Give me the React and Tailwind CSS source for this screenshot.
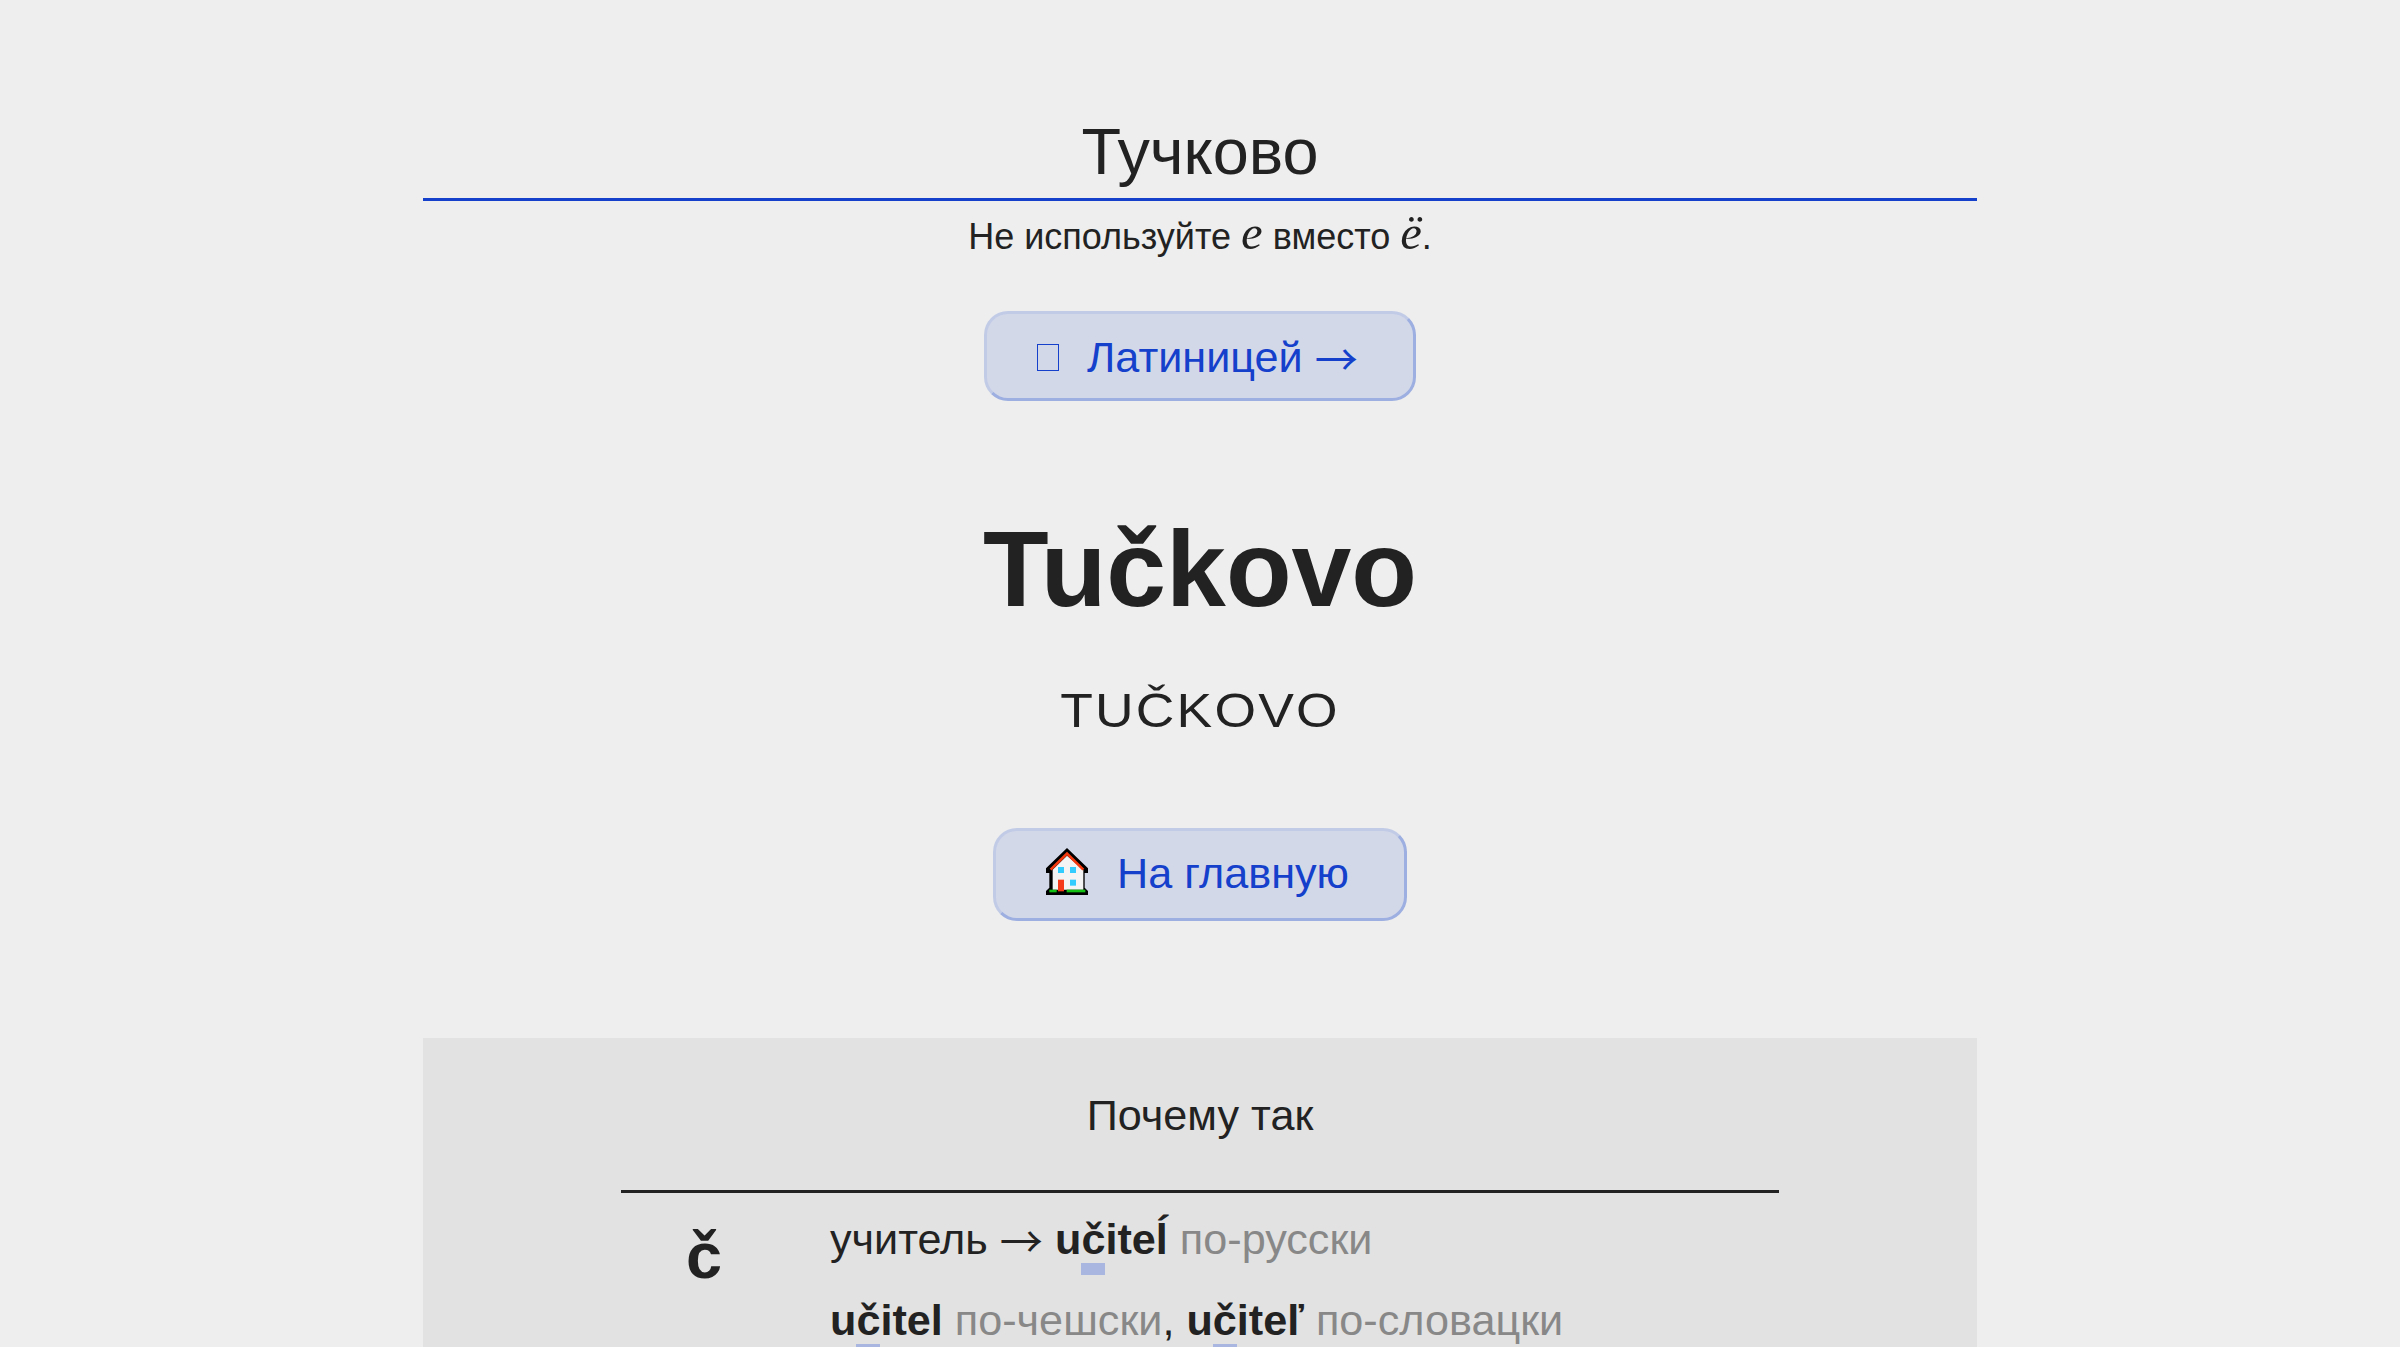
function House() {
  return (
    <svg className="mr-[29px] mb-[5px] shrink-0" width="42" height="47" viewBox="78 57 126 141" aria-hidden="true">
      <polygon fill="#000" points="141,57 204,118 204,132 194,132 194,176 204,186 204,198 78,198 78,186 88,176 88,132 78,132 78,118" />
      <polygon fill="#f4f4f4" points="141,80 190,122 190,182 98,182 98,122" />
      <polyline fill="none" stroke="#f53a10" strokeWidth="8" points="92,122 141,74 190,122" />
      <rect x="88" y="182" width="22" height="8" fill="#14c014" />
      <rect x="140" y="182" width="56" height="8" fill="#14c014" />
      <rect x="114" y="152" width="18" height="35" fill="#f53a1a" />
      <rect x="114" y="114" width="18" height="18" fill="#33ccff" />
      <rect x="150" y="114" width="18" height="18" fill="#33ccff" />
      <rect x="150" y="152" width="18" height="18" fill="#33ccff" />
    </svg>
  );
}

export default function App() {
  const mark = "border-b-[12px] border-[#a9b7e0]";
  const arrow = "font-['Noto_Sans_CJK_SC',sans-serif] leading-[0] align-[-4px]";
  return (
    <div className="h-screen overflow-hidden bg-[#eeeeee] text-[#222222] font-['Liberation_Sans',Arial,sans-serif]">
      <div className="mx-auto w-[1554px] pt-[107px] text-center">
        <h1 className="border-b-[3px] border-[#1440cc] text-[64.8px] leading-[89px] pb-[2px]">Тучково</h1>
        <p className="mt-[12px] text-[36px] leading-[48px]">
          Не используйте <i className="font-['Liberation_Serif',serif] text-[48.6px] leading-[0]">е</i> вместо <i className="font-['Liberation_Serif',serif] text-[48.6px] leading-[0]">ё</i>.
        </p>
        <a className="mt-[50px] mx-auto flex w-[432px] h-[90px] items-center justify-start pl-[50px] pt-[2px] rounded-[24px] border-[3px] border-t-[#c2cbe6] border-l-[#c2cbe6] border-r-[#9dafe0] border-b-[#9dafe0] bg-[#d3d8e9] text-[#1440cc] text-[43.2px]">
          <span className="mr-[28px] inline-block w-[22px] h-[27px] border border-[#1440cc]" />
          <span>Латиницей <span className={arrow}>→</span></span>
        </a>
        <div className="mt-[105px] font-bold text-[107.5px] leading-[126px]">Tučkovo</div>
        <div className="mt-[45px] text-[48.6px] leading-[66px] tracking-[2px] scale-x-[1.1]">TUČKOVO</div>
        <a className="mt-[85px] mx-auto flex w-[414px] h-[93px] items-center justify-start pl-[50px] pb-[2px] rounded-[24px] border-[3px] border-t-[#c2cbe6] border-l-[#c2cbe6] border-r-[#9dafe0] border-b-[#9dafe0] bg-[#d3d8e9] text-[#1440cc] text-[43.2px]">
          <House />
          На главную
        </a>
        <section className="mt-[117px] bg-[#e2e2e2] h-[400px] pt-[49px]">
          <h2 className="text-[43.2px] leading-[56px]">Почему так</h2>
          <div className="mx-auto mt-[47px] w-[1158px] border-t-[3px] border-[#222222] flex text-left text-[43.2px] pt-[18px]">
            <div className="w-[209px] pl-[65px] font-bold text-[64.8px] leading-[90px]">č</div>
            <div className="flex-1">
              <p className="leading-[56px] mb-[25px]">учитель <span className={arrow}>→</span> <b>u<span className={mark}>č</span>iteĺ</b> <span className="text-[#888888]">по-русски</span></p>
              <p className="leading-[56px]"><b>u<span className={mark}>č</span>itel</b> <span className="text-[#888888]">по-чешски</span>, <b>u<span className={mark}>č</span>iteľ</b> <span className="text-[#888888]">по-словацки</span></p>
            </div>
          </div>
        </section>
      </div>
    </div>
  );
}
